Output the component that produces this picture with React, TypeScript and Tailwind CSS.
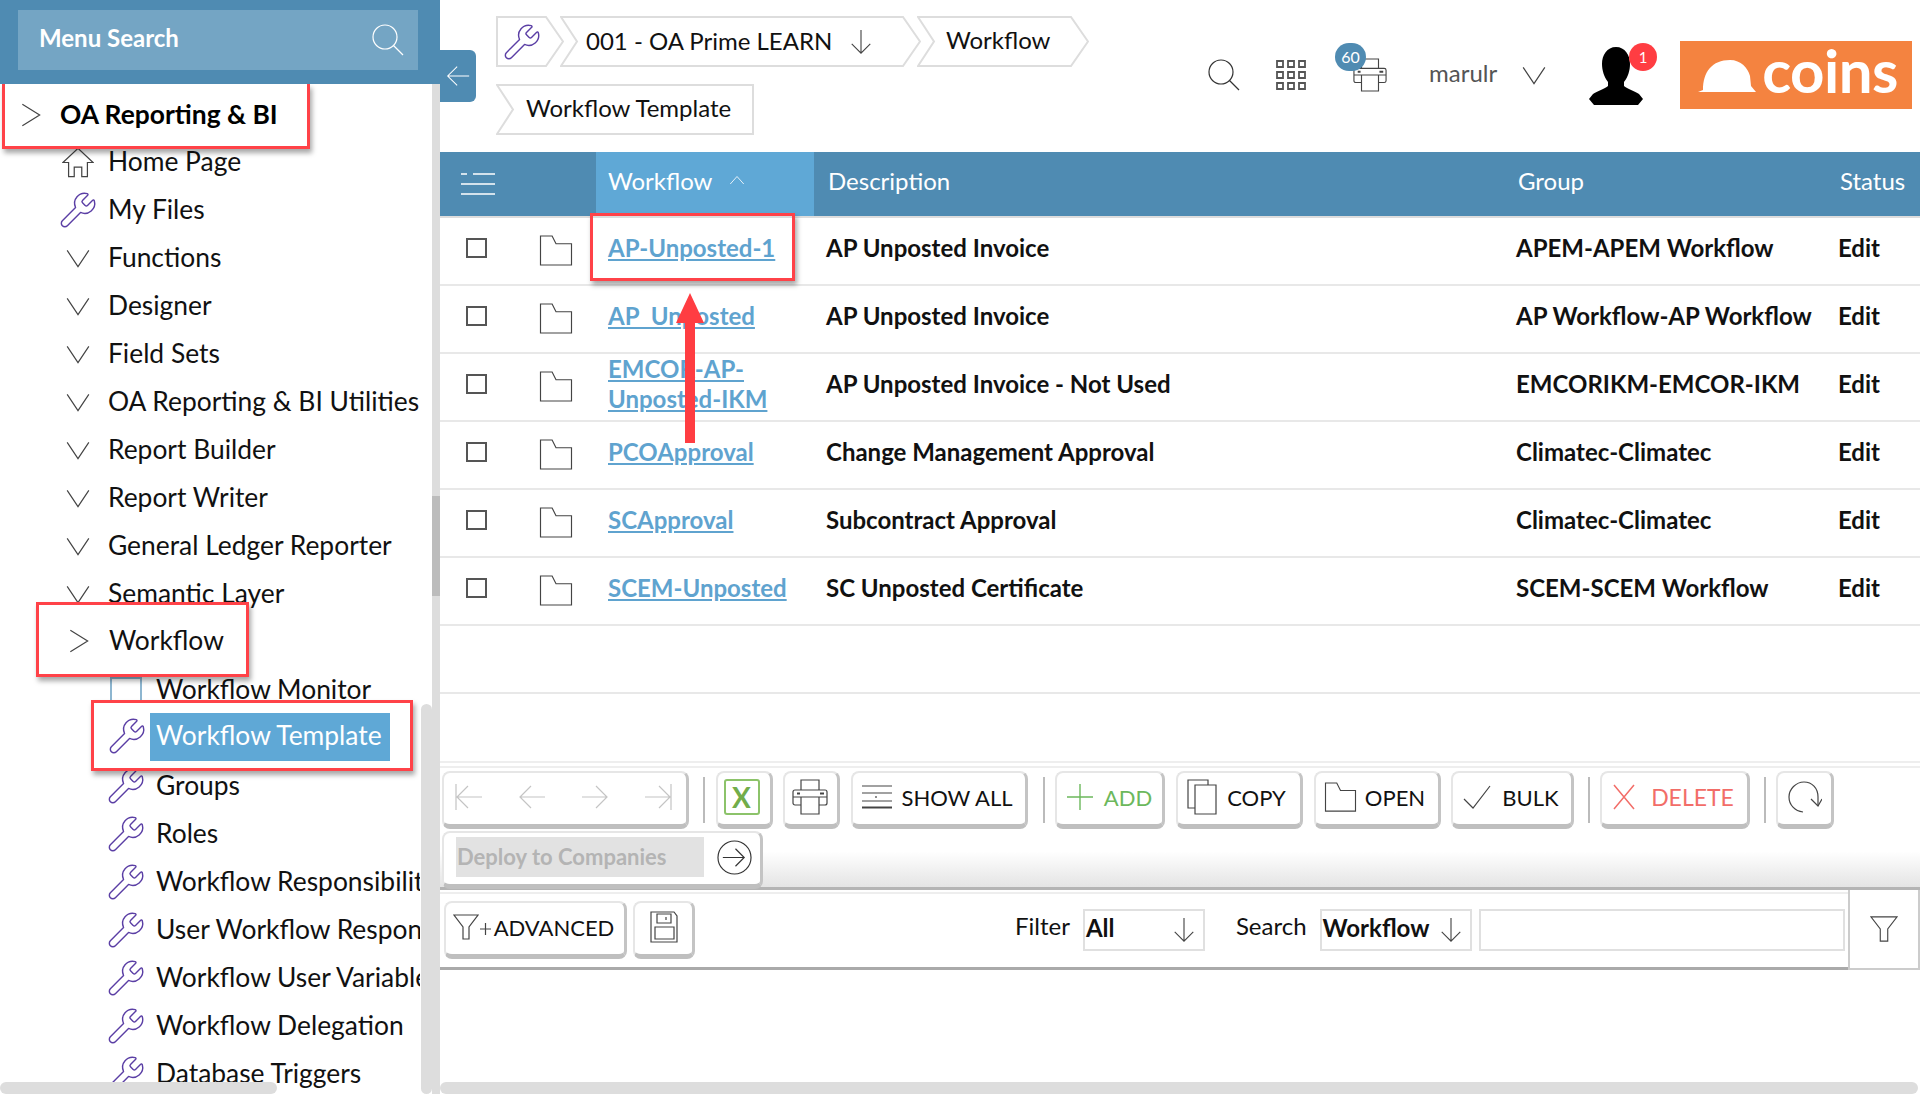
import { Wrench } from 'lucide-react';
import type { ReactNode } from 'react';

const Chev = ({ dir, className }: { dir: 'right' | 'down' | 'up'; className: string }) => (
  <svg viewBox="0 0 24 24" fill="none" stroke="currentColor" strokeWidth="1.1" className={`shrink-0 ${className}`}>
    {dir === 'right' && <path d="M4 2l16 10-16 10" />}
    {dir === 'down' && <path d="M2 5l10 15L22 5" />}
    {dir === 'up' && <path d="M3 16l9-10 9 10" />}
  </svg>
);

const ArrowLine = ({ dir, className }: { dir: 'left' | 'right' | 'down'; className: string }) => (
  <svg viewBox="0 0 28 28" fill="none" stroke="currentColor" strokeWidth="1.2" className={className}>
    {dir === 'left' && <path d="M27 14H2M13 3L2 14l11 11" />}
    {dir === 'right' && <path d="M1 14h25M15 3l11 11-11 11" />}
    {dir === 'down' && <path d="M14 1v25M4 16l10 10 10-10" />}
  </svg>
);

const Spanner = ({ className = 'w-[40px] h-[40px]' }: { className?: string }) => (
  <Wrench strokeWidth={0.85} className={`text-[#5b3fa5] shrink-0 ${className}`} />
);

const FolderIcon = ({ className }: { className: string }) => (
  <svg viewBox="0 0 34 32" fill="none" stroke="#444" strokeWidth="1.2" className={className}>
    <path d="M1 1h12l4 8h16v22H1z" />
  </svg>
);

const PrinterIcon = ({ className }: { className: string }) => (
  <svg viewBox="0 0 36 36" fill="none" stroke="#444" strokeWidth="1.2" className={className}>
    <path d="M9 11V1h18v10M9 26H3a2 2 0 0 1-2-2V13a2 2 0 0 1 2-2h30a2 2 0 0 1 2 2v11a2 2 0 0 1-2 2h-6" />
    <path d="M9 18h18v17H9zM1 18h34" />
    <path d="M5 14.5h3M28 14.5h4" strokeWidth="2" />
  </svg>
);

const FunnelIcon = ({ className }: { className: string }) => (
  <svg viewBox="0 0 30 30" fill="none" stroke="#444" strokeWidth="1.2" className={className}>
    <path d="M1 2h28L19 15v13h-8V15z" />
  </svg>
);

const btn =
  'flex items-center justify-center h-[58px] pb-[3px] shrink-0 bg-white rounded-[8px] border-2 border-[#e6e6e6] border-r-[3px] border-r-[#c4c4c4] border-b-[5px] border-b-[#bfbfbf] text-[22px]';

const Sep = ({ className }: { className: string }) => <div className={`w-[2px] h-[46px] bg-[#bbb] shrink-0 ${className}`} />;

const Crumb = ({ w, kind, className, children }: { w: number; kind: 'first' | 'mid' | 'last'; className: string; children: ReactNode }) => {
  const h = 51;
  const left = kind === 'first' ? `1,1` : `1,1 17,${h / 2} 1,${h - 1}`;
  const right = kind === 'last' ? `${w - 1},${h - 1} ${w - 1},1` : `${w - 18},${h - 1} ${w - 1},${h / 2} ${w - 18},1`;
  const pts = kind === 'first' ? `1,1 1,${h - 1} ${right}` : `${left} ${right}`;
  return (
    <div className={`relative h-[51px] shrink-0 flex items-center ${className}`}>
      <svg viewBox={`0 0 ${w} ${h}`} className="absolute inset-0 w-full h-full" fill="none" stroke="#ddd" strokeWidth="2">
        <polygon points={pts} />
      </svg>
      {children}
    </div>
  );
};

const menu = [
  { label: 'Home Page', icon: 'home' },
  { label: 'My Files', icon: 'wrench' },
  { label: 'Functions', icon: 'down' },
  { label: 'Designer', icon: 'down' },
  { label: 'Field Sets', icon: 'down' },
  { label: 'OA Reporting & BI Utilities', icon: 'down' },
  { label: 'Report Builder', icon: 'down' },
  { label: 'Report Writer', icon: 'down' },
  { label: 'General Ledger Reporter', icon: 'down' },
  { label: 'Semantic Layer', icon: 'down' },
];

const subMenu = ['Groups', 'Roles', 'Workflow Responsibilities', 'User Workflow Responsibilities', 'Workflow User Variables', 'Workflow Delegation', 'Database Triggers'];

const rows = [
  { name: 'AP-Unposted-1', desc: 'AP Unposted Invoice', group: 'APEM-APEM Workflow' },
  { name: 'AP_Unposted', desc: 'AP Unposted Invoice', group: 'AP Workflow-AP Workflow' },
  { name: 'EMCOR-AP-Unposted-IKM', desc: 'AP Unposted Invoice - Not Used', group: 'EMCORIKM-EMCOR-IKM' },
  { name: 'PCOApproval', desc: 'Change Management Approval', group: 'Climatec-Climatec' },
  { name: 'SCApproval', desc: 'Subcontract Approval', group: 'Climatec-Climatec' },
  { name: 'SCEM-Unposted', desc: 'SC Unposted Certificate', group: 'SCEM-SCEM Workflow' },
];

const redBox = 'border-[3px] border-[#ff4248] shadow-[2px_4px_5px_rgba(0,0,0,0.35)]';
const tableCols = 'grid grid-cols-[156px_218px_690px_322px_1fr]';

const Sidebar = () => (
  <aside className="relative w-[440px] h-full shrink-0 overflow-hidden bg-white">
    <div className="h-[84px] bg-[#4f8bb2] pt-[10px] pl-[18px]">
      <div className="w-[400px] h-[60px] bg-[#74a5c4] flex items-center justify-between pl-[21px] pr-[14px]">
        <span className="text-[24px] font-bold text-white pb-[4px]">Menu Search</span>
        <svg viewBox="0 0 32 32" fill="none" stroke="#fff" strokeWidth="1.2" className="w-[32px] h-[32px]">
          <circle cx="13" cy="13" r="12" />
          <path d="M21.5 21.5L31 31" />
        </svg>
      </div>
    </div>

    <div className="w-[420px] overflow-hidden text-[26.4px] text-[#111]">
      <div className={`relative z-10 h-[65px] -mb-[11px] ml-[2px] w-[308px] flex items-center pb-[1px] ${redBox} border-t-0 bg-white`}>
        <Chev dir="right" className="w-[26px] h-[26px] ml-[13px] text-[#444]" />
        <span className="ml-[16px] font-bold text-black">OA Reporting &amp; BI</span>
      </div>
      {menu.map((m) => (
        <div key={m.label} className="h-[48px] flex items-center whitespace-nowrap">
          <div className="w-[108px] shrink-0 flex items-center">
            {m.icon === 'home' && (
              <svg viewBox="0 0 34 32" fill="none" stroke="#444" strokeWidth="1.3" className="w-[32px] h-[31px] ml-[62px]">
                <path d="M1 16L17 1l16 15h-6v15h-6V21h-8v10H7V16z" />
              </svg>
            )}
            {m.icon === 'wrench' && <Spanner className="w-[40px] h-[40px] ml-[58px]" />}
            {m.icon === 'down' && <Chev dir="down" className="w-[26px] h-[26px] ml-[65px] text-[#444]" />}
          </div>
          <span>{m.label}</span>
        </div>
      ))}
      <div className={`relative z-10 h-[75px] -mt-[16px] ml-[36px] w-[213px] flex items-center bg-white ${redBox} pt-[2px]`}>
        <Chev dir="right" className="w-[26px] h-[26px] ml-[27px] text-[#444]" />
        <span className="ml-[17px]">Workflow</span>
      </div>
      <div className="h-[48px] -mt-[11px] flex items-center whitespace-nowrap">
        <div className="w-[32px] h-[26px] ml-[110px] mr-[14px] border-2 border-[#8db6d0] shrink-0" />
        <span>Workflow Monitor</span>
      </div>
      <div className={`relative z-10 h-[71px] -mt-[14px] ml-[91px] w-[322px] flex items-center bg-white ${redBox}`}>
        <Spanner className="w-[40px] h-[40px] ml-[13px]" />
        <span className="ml-[3px] mt-[3px] h-[48px] w-[240px] bg-[#5fa8d6] text-white flex items-center pl-[6px] pb-[2px]">Workflow Template</span>
      </div>
      <div className="-mt-[9px]">
        {subMenu.map((s) => (
          <div key={s} className="h-[48px] flex items-center whitespace-nowrap pl-[106px]">
            <Spanner className="w-[40px] h-[40px] mr-[10px]" />
            <span>{s}</span>
          </div>
        ))}
      </div>
    </div>

    {/* scroll bars */}
    <div className="absolute top-[84px] bottom-0 right-0 w-[8px] bg-[#ddd]">
      <div className="absolute top-[412px] h-[100px] w-full bg-[#bcbcbc]" />
    </div>
    <div className="absolute top-[704px] bottom-0 right-[8px] w-[11px] rounded-full bg-[#ddd]" />
    <div className="absolute bottom-0 left-0 w-[277px] h-[12px] rounded-full bg-[#ddd]" />
  </aside>
);

const TopBar = () => (
  <header className="h-[152px] shrink-0 flex">
    <div className="w-[908px] shrink-0 pl-[56px] pt-[16px] text-[24px] text-[#111]">
      <div className="flex">
        <Crumb w={68} kind="first" className="w-[68px]">
          <Spanner className="w-[40px] h-[40px] ml-[6px]" />
        </Crumb>
        <Crumb w={361} kind="mid" className="w-[361px] -ml-[4px]">
          <span className="ml-[26px] pb-[1px]">001 - OA Prime LEARN</span>
          <ArrowLine dir="down" className="w-[26px] h-[26px] ml-[16px] text-[#444]" />
        </Crumb>
        <Crumb w={172} kind="mid" className="w-[172px] -ml-[4px]">
          <span className="ml-[29px] pb-[3px]">Workflow</span>
        </Crumb>
      </div>
      <div className="mt-[17px]">
        <Crumb w={258} kind="last" className="w-[258px]">
          <span className="ml-[30px] pb-[4px]">Workflow Template</span>
        </Crumb>
      </div>
    </div>

    <div className="flex-1 flex items-center -mt-[2px]">
      <svg viewBox="0 0 32 32" fill="none" stroke="#333" strokeWidth="1.2" className="w-[32px] h-[32px] ml-[-140px]">
        <circle cx="13" cy="13" r="12" />
        <path d="M21.5 21.5L31 31" />
      </svg>
      <svg viewBox="0 0 30 30" fill="none" stroke="#555" strokeWidth="1.8" className="w-[30px] h-[30px] ml-[36px]">
        <path d="M1 1h6v6H1zM12 1h6v6h-6zM23 1h6v6h-6zM1 12h6v6H1zM12 12h6v6h-6zM23 12h6v6h-6zM1 23h6v6H1zM12 23h6v6h-6zM23 23h6v6h-6z" />
      </svg>
      <div className="relative w-[34px] h-[34px] ml-[47px]">
        <PrinterIcon className="w-[34px] h-[34px]" />
        <span className="absolute -left-[18px] -top-[15px] w-[31px] h-[28px] rounded-full bg-[#4f8bb2] text-white text-[16px] flex items-center justify-center">60</span>
      </div>
      <span className="ml-[42px] text-[24px] text-[#555] pb-[4px]">marulr</span>
      <Chev dir="down" className="w-[26px] h-[26px] ml-[24px] text-[#444]" />
      <div className="relative w-[54px] h-[58px] ml-[42px] mt-[2px]">
        <svg viewBox="0 0 54 58" className="w-[54px] h-[58px]" fill="#000">
          <path d="M27 0c9 0 14 8 14 17 0 6-2 13-6 18v4c3 3 11 5 15 8l4 5-5 6H5l-5-6 4-5c4-3 12-5 15-8v-4c-4-5-6-12-6-18C13 8 18 0 27 0z" />
        </svg>
        <span className="absolute left-[40px] -top-[4px] w-[28px] h-[28px] rounded-full bg-[#ff3d42] text-white text-[15px] flex items-center justify-center">1</span>
      </div>
      <div className="w-[232px] h-[68px] ml-[37px] bg-[#f48340] flex items-center shrink-0">
        <svg viewBox="0 0 58 33" fill="#fff" className="w-[58px] h-[33px] ml-[18px] mt-[2px]">
          <path d="M5 30C5 12 14 0 32 0c11 0 18 8 20 16l1 10 5 6H0l5-2z" />
        </svg>
        <span className="ml-[6px] text-[60px] leading-none font-bold text-white -mt-[11px] tracking-[-0.5px]">coins</span>
      </div>
    </div>
  </header>
);

const Table = () => (
  <div className="flex-1 min-h-0 text-[24px]">
    <div className={`${tableCols} h-[64px] bg-[#4f8bb2] text-white items-stretch`}>
      <div className="flex items-center pl-[21px]">
        <svg viewBox="0 0 34 24" fill="none" stroke="#fff" strokeWidth="1.4" className="w-[34px] h-[24px]">
          <path d="M0 2h6M12 2h22M0 12h34M0 22h34" />
        </svg>
      </div>
      <div className="bg-[#5fa8d6] flex items-center pl-[12px] pb-[6px]">
        <span>Workflow</span>
        <Chev dir="up" className="w-[18px] h-[18px] ml-[16px]" />
      </div>
      <div className="flex items-center pl-[14px] pb-[6px]">Description</div>
      <div className="flex items-center pl-[14px] pb-[6px]">Group</div>
      <div className="flex items-center pl-[14px] pb-[6px]">Status</div>
    </div>
    <div className="h-[2px] bg-[#ddd]" />
    {rows.map((r) => (
      <div key={r.name} className={`${tableCols} h-[68px] border-b-2 border-[#e8e8e8] items-center font-bold text-[#111]`}>
        <div className="flex items-center pl-[26px]">
          <div className="w-[21px] h-[20px] border-2 border-[#555] shrink-0 -mt-[7px]" />
          <FolderIcon className="w-[34px] h-[31px] ml-[52px] -mt-[2px]" />
        </div>
        <a className="pl-[12px] pr-[12px] pb-[6px] text-[#5fa3cf] underline leading-[30px] break-words">{r.name}</a>
        <div className="pl-[12px] pb-[6px]">{r.desc}</div>
        <div className="pl-[12px] pb-[6px]">{r.group}</div>
        <div className="pl-[12px] pb-[6px]">Edit</div>
      </div>
    ))}
    <div className="h-[68px] border-b-2 border-[#e8e8e8]" />
  </div>
);

const Toolbar = () => (
  <div className="shrink-0">
    <div className="h-[2px] bg-[#eee]" />
    <div className="h-[3px]" />
    <div className="h-[2px] bg-[#eee]" />
    <div className="h-[122px] pl-[2px] pt-[3px] bg-gradient-to-b from-white from-[70%] to-[#e4e4e4] border-b-[3px] border-[#b4b4b4]">
      <div className="flex items-center text-[#111]">
        <div className={`${btn} w-[247px] gap-[35px] pr-[3px] text-[#c4c4c4]`}>
          <svg viewBox="0 0 28 28" fill="none" stroke="currentColor" strokeWidth="1.2" className="w-[28px] h-[28px]">
            <path d="M1 1v26M27 14H2M13 3L2 14l11 11" />
          </svg>
          <ArrowLine dir="left" className="w-[28px] h-[28px]" />
          <ArrowLine dir="right" className="w-[28px] h-[28px]" />
          <svg viewBox="0 0 28 28" fill="none" stroke="currentColor" strokeWidth="1.2" className="w-[28px] h-[28px]">
            <path d="M27 1v26M1 14h25M15 3l11 11-11 11" />
          </svg>
        </div>
        <Sep className="ml-[14px]" />
        <div className={`${btn} w-[57px] ml-[11px] pr-[5px]`}>
          <div className="w-[36px] h-[36px] border-2 border-[#8cc36a] rounded-[3px] flex items-center justify-center text-[#72ad4a] font-bold text-[28px] leading-none">X</div>
        </div>
        <div className={`${btn} w-[57px] ml-[10px] pr-[2px]`}>
          <PrinterIcon className="w-[36px] h-[36px]" />
        </div>
        <div className={`${btn} w-[177px] ml-[11px] pr-[4px]`}>
          <svg viewBox="0 0 30 24" fill="none" stroke="#444" strokeWidth="1.2" className="w-[30px] h-[24px] mr-[10px]">
            <path d="M0 1h30M0 8h30M0 16h30" />
            <path d="M14 11v2" />
            <path d="M0 22.5h30" strokeWidth="2" />
          </svg>
          SHOW ALL
        </div>
        <Sep className="ml-[15px]" />
        <div className={`${btn} w-[110px] ml-[10px] text-[#6cb85c]`}>
          <svg viewBox="0 0 26 26" fill="none" stroke="currentColor" strokeWidth="1.4" className="w-[26px] h-[26px] mr-[11px]">
            <path d="M13 0v26M0 13h26" />
          </svg>
          ADD
        </div>
        <div className={`${btn} w-[127px] ml-[11px] pr-[5px]`}>
          <svg viewBox="0 0 30 36" fill="none" stroke="#444" strokeWidth="1.2" className="w-[30px] h-[36px] mr-[10px]">
            <path d="M8 29H1V1h20v5" />
            <path d="M8 6h21v29H8z" />
          </svg>
          COPY
        </div>
        <div className={`${btn} w-[127px] ml-[11px] pr-[5px]`}>
          <FolderIcon className="w-[33px] h-[30px] mr-[8px]" />
          OPEN
        </div>
        <div className={`${btn} w-[123px] ml-[10px] pr-[2px]`}>
          <svg viewBox="0 0 28 24" fill="none" stroke="#444" strokeWidth="1.2" className="w-[28px] h-[24px] mr-[11px]">
            <path d="M1 14l9 9L27 1" />
          </svg>
          BULK
        </div>
        <Sep className="ml-[14px]" />
        <div className={`${btn} w-[150px] ml-[10px] text-[#f26d68] pr-[2px]`}>
          <svg viewBox="0 0 22 26" fill="none" stroke="currentColor" strokeWidth="1.5" className="w-[22px] h-[26px] mr-[16px]">
            <path d="M1 1l20 24M21 1L1 25" />
          </svg>
          <span className="text-[23px]">DELETE</span>
        </div>
        <Sep className="ml-[14px]" />
        <div className={`${btn} w-[58px] ml-[10px]`}>
          <svg viewBox="0 0 34 32" fill="none" stroke="#444" strokeWidth="1.2" className="w-[34px] h-[32px]">
            <path d="M15 31C7 30 1 24 1 16 1 8 8 1 16 1s14 6 14 15v9" />
            <path d="M23 18l7 7 4-7" />
          </svg>
        </div>
      </div>
      <div className={`${btn} w-[321px] h-[56px] justify-start pl-[12px] mt-[2px]`}>
        <div className="w-[248px] h-[40px] bg-[#e2e2e2] text-[#b4b4b4] font-bold flex items-center pl-[1px] pb-[2px] text-[22px]">Deploy to Companies</div>
        <svg viewBox="0 0 36 36" fill="none" stroke="#333" strokeWidth="1.2" className="w-[35px] h-[35px] ml-[13px]">
          <circle cx="18" cy="18" r="17" />
          <path d="M6 18h22M19 9l9 9-9 9" />
        </svg>
      </div>
    </div>
  </div>
);

const FilterBar = () => (
  <div className="shrink-0 h-[80px] flex">
    <div className="flex-1 flex flex-col border-b-[3px] border-[#aaa] pt-[2px] min-w-0">
      <div className="h-[2px] bg-[#eee]" />
      <div className="flex items-center pl-[4px] pt-[7px] text-[#111]">
        <div className={`${btn} w-[183px] pr-[3px]`}>
          <svg viewBox="0 0 38 28" fill="none" stroke="#444" strokeWidth="1.2" className="w-[38px] h-[28px] mr-[3px]">
            <path d="M1 2h24L16 14v12H10V14zM27 16h11M32.5 10v12" />
          </svg>
          ADVANCED
        </div>
        <div className={`${btn} w-[62px] ml-[6px]`}>
          <svg viewBox="0 0 28 32" fill="none" stroke="#444" strokeWidth="1.2" className="w-[28px] h-[32px]">
            <path d="M1 1h23l3 4v26H1z" />
            <path d="M7 3h14v9H7zM5 16h19v12H5zM16 6v3" />
          </svg>
        </div>
        <span className="ml-[320px] text-[24px] pb-[8px]">Filter</span>
        <div className="ml-[13px] w-[122px] h-[42px] border-2 border-[#e0e0e0] flex items-center justify-between pl-[1px] pr-[6px] text-[24px] font-bold">
          <span className="pb-[5px]">All</span>
          <ArrowLine dir="down" className="w-[26px] h-[26px] text-[#444]" />
        </div>
        <span className="ml-[31px] text-[24px] pb-[8px]">Search</span>
        <div className="ml-[13px] w-[152px] h-[42px] border-2 border-[#e0e0e0] flex items-center justify-between pl-[1px] pr-[6px] text-[24px] font-bold">
          <span className="pb-[5px]">Workflow</span>
          <ArrowLine dir="down" className="w-[26px] h-[26px] text-[#444]" />
        </div>
        <div className="ml-[7px] w-[366px] h-[42px] border-2 border-[#e0e0e0]" />
      </div>
    </div>
    <div className="w-[72px] shrink-0 border-l-2 border-b-2 border-r-2 border-[#ccc] flex items-center justify-center">
      <FunnelIcon className="w-[28px] h-[30px]" />
    </div>
  </div>
);

export default function App() {
  return (
    <div className="relative w-[1920px] h-[1094px] flex overflow-hidden bg-white font-['Lato',sans-serif]">
      <Sidebar />
      <main className="relative flex-1 min-w-0 h-full flex flex-col">
        <button className="absolute left-0 top-[50px] w-[36px] h-[52px] bg-[#4f8bb2] rounded-r-[6px] flex items-center justify-center text-white">
          <ArrowLine dir="left" className="w-[24px] h-[24px]" />
        </button>
        <TopBar />
        <Table />
        <Toolbar />
        <FilterBar />
        <div className="h-[112px] shrink-0" />
        <div className="h-[12px] shrink-0 mr-[2px] rounded-full bg-[#ddd]" />
      </main>

      {/* annotations drawn over the screenshot */}
      <div className={`absolute left-[590px] top-[213px] w-[205px] h-[68px] ${redBox}`} />
      <svg viewBox="0 0 28 150" className="absolute left-[676px] top-[293px] w-[28px] h-[150px]" fill="#ff3d42">
        <path d="M14 0l14 30h-9v120H9V30H0z" />
      </svg>
    </div>
  );
}
